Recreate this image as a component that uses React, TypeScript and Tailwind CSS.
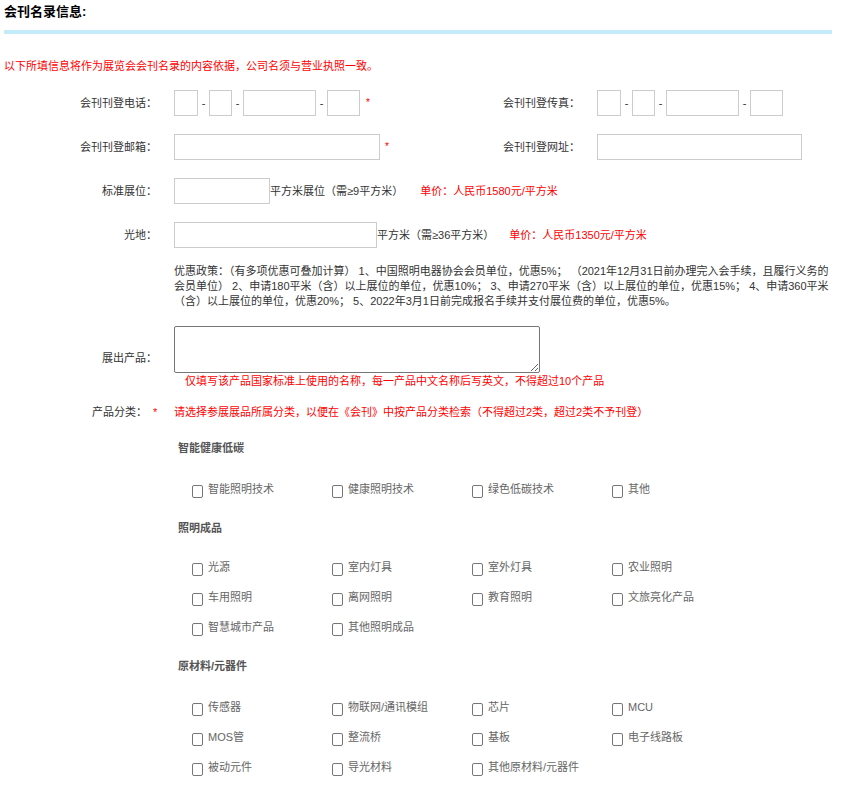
import React from 'react';

const groups = [
  {
    title: '智能健康低碳',
    items: ['智能照明技术', '健康照明技术', '绿色低碳技术', '其他'],
  },
  {
    title: '照明成品',
    items: ['光源', '室内灯具', '室外灯具', '农业照明', '车用照明', '离网照明', '教育照明', '文旅亮化产品', '智慧城市产品', '其他照明成品'],
  },
  {
    title: '原材料/元器件',
    items: ['传感器', '物联网/通讯模组', '芯片', 'MCU', 'MOS管', '整流桥', '基板', '电子线路板', '被动元件', '导光材料', '其他原材料/元器件'],
  },
];

const Box = ({ w }: { w: string }) => <div className={`h-[26px] border border-[#cccccc] bg-white ${w}`} />;

const Dash = () => <span className="w-[11px] text-center text-[#333]">-</span>;

const Star = ({ className = '' }: { className?: string }) => (
  <span className={`text-[10px] text-[#ff0000] ${className}`}>*</span>
);

const PhoneBoxes = ({ star }: { star?: boolean }) => (
  <div className="flex items-center">
    <Box w="w-[24px]" />
    <Dash />
    <Box w="w-[23px]" />
    <Dash />
    <Box w="w-[73px]" />
    <Dash />
    <Box w="w-[33px]" />
    {star && <Star className="ml-[6px]" />}
  </div>
);

const Label = ({ children, w = 'w-[157px]' }: { children: React.ReactNode; w?: string }) => (
  <div className={`${w} shrink-0 text-right`}>{children}</div>
);

const CheckItem = ({ text }: { text: string }) => {
  const [on, setOn] = React.useState(false);
  return (
    <label className="flex items-start gap-[5px] h-[30px] pt-[7px] cursor-pointer" onClick={() => setOn(!on)}>
      <span className={`mt-[4px] w-[11px] h-[13px] rounded-[2px] border border-[#767676] ${on ? 'bg-[#0075ff]' : 'bg-white'}`} />
      <span className="leading-[16px] text-[#666666]">{text}</span>
    </label>
  );
};

export default function App() {
  return (
    <div className="w-[843px] bg-white text-[11px] leading-[16px] text-[#333333] font-['Liberation_Sans','Noto_Sans_CJK_SC',sans-serif]">
      <div className="px-[4px] pt-[2px]">
        <div className="h-[20px] text-[13px] leading-[20px] font-bold text-black">会刊名录信息:</div>
        <div className="mt-[8px] h-[4px] w-[828px] bg-[#c3ecfb]" />
        <div className="mt-[24px] text-[#ff0000]">以下所填信息将作为展览会会刊名录的内容依据，公司名须与营业执照一致。</div>
      </div>

      <div className="mt-[7px]">
        {/* phone / fax */}
        <div className="flex items-center h-[44px]">
          <Label>会刊刊登电话：</Label>
          <div className="w-[269px] pl-[17px]">
            <PhoneBoxes star />
          </div>
          <Label w="w-[154px]">会刊刊登传真：</Label>
          <div className="pl-[17px]">
            <PhoneBoxes />
          </div>
        </div>

        {/* mail / url */}
        <div className="flex items-center h-[44px]">
          <Label>会刊刊登邮箱：</Label>
          <div className="w-[269px] pl-[17px] flex items-center">
            <Box w="w-[206px]" />
            <Star className="ml-[5px]" />
          </div>
          <Label w="w-[154px]">会刊刊登网址：</Label>
          <div className="pl-[17px]">
            <Box w="w-[205px]" />
          </div>
        </div>

        {/* standard booth */}
        <div className="flex items-center h-[44px]">
          <Label>标准展位：</Label>
          <div className="pl-[17px] flex items-center">
            <Box w="w-[96px]" />
            <span>平方米展位（需≥9平方米）</span>
            <span className="ml-[17px] text-[#ff0000]">单价：人民币1580元/平方米</span>
          </div>
        </div>

        {/* raw space */}
        <div className="flex items-center h-[44px]">
          <Label>光地：</Label>
          <div className="pl-[17px] flex items-center">
            <Box w="w-[203px]" />
            <span>平方米（需≥36平方米）</span>
            <span className="ml-[15px] text-[#ff0000]">单价：人民币1350元/平方米</span>
          </div>
        </div>
      </div>

      {/* discount policy */}
      <div className="mt-[7px] pl-[174px] leading-[15px] whitespace-nowrap">
        <div>优惠政策：（有多项优惠可叠加计算） 1、中国照明电器协会会员单位，优惠5%； （2021年12月31日前办理完入会手续，且履行义务的</div>
        <div>会员单位） 2、申请180平米（含）以上展位的单位，优惠10%； 3、申请270平米（含）以上展位的单位，优惠15%； 4、申请360平米</div>
        <div>（含）以上展位的单位，优惠20%； 5、2022年3月1日前完成报名手续并支付展位费的单位，优惠5%。</div>
      </div>

      {/* products */}
      <div className="mt-[17px] flex items-center">
        <Label>展出产品：</Label>
        <div className="pl-[17px]">
          <textarea className="block w-[366px] h-[47px] border border-[#767676] rounded-[2px] resize-y" />
          <div className="pl-[11px] text-[#ff0000]">仅填写该产品国家标准上使用的名称，每一产品中文名称后写英文，不得超过10个产品</div>
        </div>
      </div>

      {/* categories */}
      <div className="mt-[15px] flex items-center">
        <Label w="w-[147px]">产品分类：</Label>
        <span className="w-[27px] pl-[6px] text-[#ff0000]">*</span>
        <span className="text-[#ff0000]">请选择参展展品所属分类，以便在《会刊》中按产品分类检索（不得超过2类，超过2类不予刊登）</span>
      </div>

      <div className="mt-[20px] pb-[7px]">
        {groups.map((g, gi) => (
          <div key={g.title} className={gi === 0 ? '' : 'mt-[16px]'}>
            <div className="pl-[178px] font-bold text-[#555555]">{g.title}</div>
            <div className={`pl-[192px] grid grid-cols-[140px_140px_140px_140px] ${gi === 1 ? 'mt-[16px]' : 'mt-[18px]'}`}>
              {g.items.map((it) => (
                <CheckItem key={it} text={it} />
              ))}
            </div>
          </div>
        ))}
      </div>
    </div>
  );
}
